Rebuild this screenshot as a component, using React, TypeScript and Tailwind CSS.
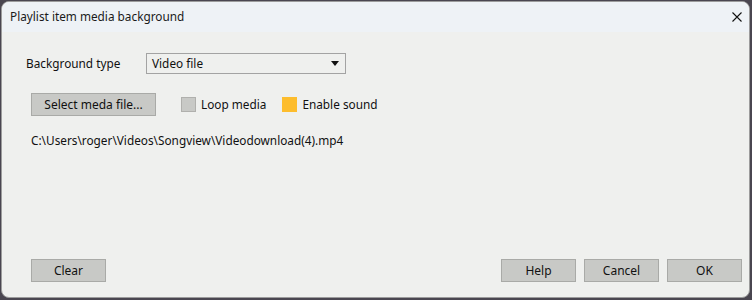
import React from "react";

const font = { fontFamily: '"Noto Sans", "Open Sans", sans-serif' };

const WinButton: React.FC<{ label: string; className?: string }> = ({ label, className = "" }) => (
  <button
    className={`h-[23px] bg-[#c8c9c6] border border-[#a9aaa7] text-[12px] text-[#111] leading-none flex items-center justify-center ${className}`}
  >
    {label}
  </button>
);

const App: React.FC = () => {
  return (
    <div className="w-[752px] h-[300px] bg-[#4a4650] pl-[1px] pt-[1px] pr-[2px] pb-[2px]" style={font}>
      <div className="w-full h-full flex flex-col rounded-[8px] border border-[#9c9c9c] bg-[#eff0ee] overflow-hidden">
        {/* title bar */}
        <div className="h-[30px] shrink-0 bg-[#eef2f6] flex items-center justify-between pl-[8px] pr-[7px]">
          <span className="text-[11.8px] text-[#1a1a1a]">Playlist item media background</span>
          <svg width="10" height="10" viewBox="0 0 10 10">
            <path d="M0.5 0.5 L9.5 9.5 M9.5 0.5 L0.5 9.5" stroke="#111" strokeWidth="1.1" fill="none" />
          </svg>
        </div>

        {/* body */}
        <div className="flex-1 flex flex-col pl-[29px] pr-[7px] pt-[21px] pb-[15px]">
          <div className="flex items-center h-[21px]">
            <span className="w-[120px] -ml-[5px] text-[11.8px] text-[#111]">Background type</span>
            <div className="w-[200px] h-[21px] border border-[#a3a3a3] flex items-center justify-between pl-[5px] pr-[6px]">
              <span className="text-[11.8px] text-[#111]">Video file</span>
              <svg width="8" height="6" viewBox="0 0 8 6">
                <path d="M0 0 H8 L4 5 Z" fill="#111" />
              </svg>
            </div>
          </div>

          <div className="flex items-center mt-[19px]">
            <WinButton label="Select meda file..." className="w-[125px]" />
            <div className="flex items-center ml-[25px]">
              <span className="w-[15px] h-[15px] bg-[#c8c9c6] border border-[#b0b0ad]" />
              <span className="ml-[5px] text-[11.8px] text-[#111]">Loop media</span>
            </div>
            <div className="flex items-center ml-[16px]">
              <span className="w-[15px] h-[15px] bg-[#fdbd2d]" />
              <span className="ml-[5px] text-[11.8px] text-[#111]">Enable sound</span>
            </div>
          </div>

          <div className="mt-[16px] text-[11.8px] text-[#111] leading-[16px]">
            C:\Users\roger\Videos\Songview\Videodownload(4).mp4
          </div>

          <div className="mt-auto flex items-center">
            <WinButton label="Clear" className="w-[75px]" />
            <div className="ml-auto flex gap-[8px]">
              <WinButton label="Help" className="w-[75px]" />
              <WinButton label="Cancel" className="w-[75px]" />
              <WinButton label="OK" className="w-[75px]" />
            </div>
          </div>
        </div>
      </div>
    </div>
  );
};

export default App;
